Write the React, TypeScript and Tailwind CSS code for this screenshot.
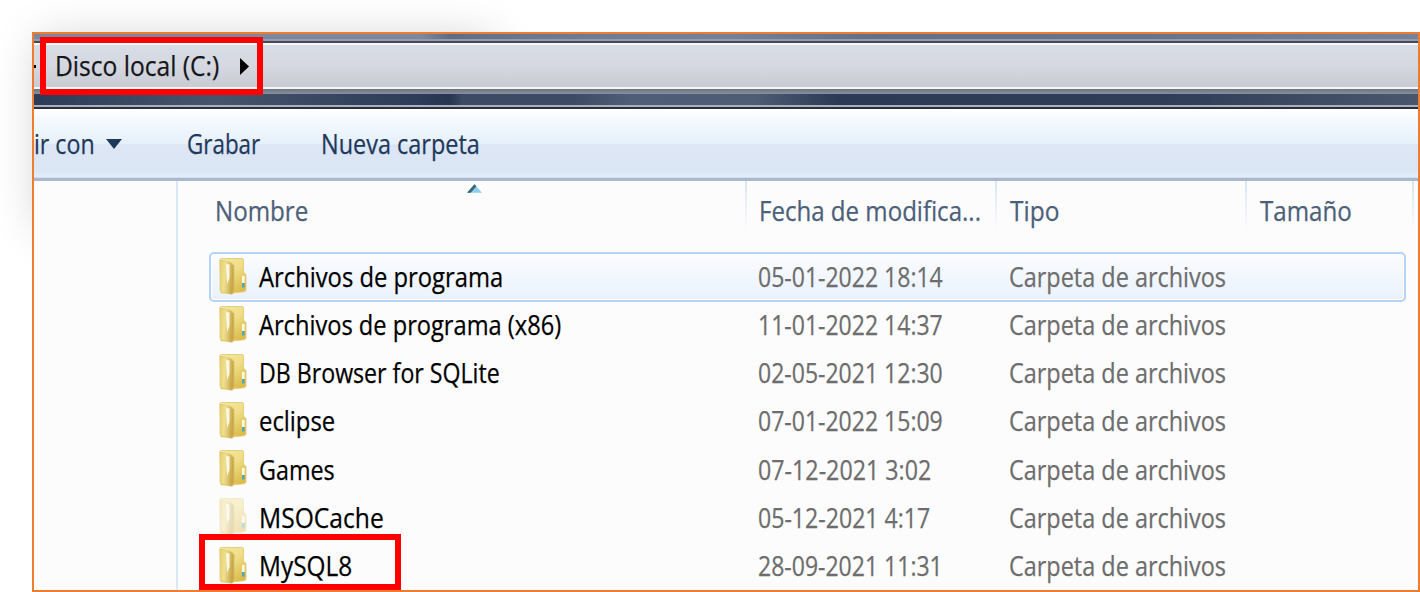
import { useLayoutEffect, useRef, useState } from "react";

function Fit({ children, w, className = "" }: { children: string; w: number; className?: string }) {
  const ref = useRef<HTMLSpanElement>(null);
  const [scale, setScale] = useState(1);
  useLayoutEffect(() => {
    if (ref.current) setScale(w / ref.current.offsetWidth);
  }, [w]);
  return (
    <span className="block shrink-0" style={{ width: w }}>
      <span
        ref={ref}
        className={"inline-block origin-left whitespace-pre [-webkit-text-stroke:0.25px] " + className}
        style={{ transform: `scaleX(${scale})` }}
      >
        {children}
      </span>
    </span>
  );
}

function Folder({ faded = false }: { faded?: boolean }) {
  return (
    <svg viewBox="0 0 30 38" className={"-mt-[3px] h-[38px] w-[30px] shrink-0 " + (faded ? "opacity-40" : "")}>
      <defs>
        <linearGradient id="back" x1="0" y1="0" x2="0.7" y2="1">
          <stop offset="0" stopColor="#f5e9a0" />
          <stop offset="0.5" stopColor="#f0de88" />
          <stop offset="1" stopColor="#dcbb48" />
        </linearGradient>
        <linearGradient id="front" x1="0" y1="0" x2="1" y2="0.2">
          <stop offset="0" stopColor="#e8d06d" />
          <stop offset="0.45" stopColor="#efdf92" />
          <stop offset="1" stopColor="#c6a649" />
        </linearGradient>
      </defs>
      <path d="M2 3Q2 1.5 3.5 1.5H24Q25.5 1.5 25.5 3V15L28 17.5V32.5Q28 34.5 26 34.8L13 36H3Z" fill="url(#back)" stroke="#e2cc78" strokeWidth="0.9" />
      <path d="M2 3L12.5 5.5Q15.5 6.5 15.5 9.5V34.5Q15.5 38 12 37L3.5 35Q2 34.5 2 33Z" fill="url(#front)" stroke="#dcc669" strokeWidth="0.7" />
      <path d="M8 7L11.5 7.5V21L9 27Z" fill="#fffceb" opacity="0.9" />
      <path d="M15.8 8V34" stroke="#c0a44d" strokeWidth="1.2" opacity="0.6" />
      <rect x="24" y="19" width="2.6" height="7" fill="#fbf8e4" />
      <rect x="24" y="26" width="2.6" height="4.5" fill="#4aa7bd" />
    </svg>
  );
}

const rows = [
  { name: "Archivos de programa", w: 244, date: "05-01-2022 18:14", dw: 185 },
  { name: "Archivos de programa (x86)", w: 302, date: "11-01-2022 14:37", dw: 185 },
  { name: "DB Browser for SQLite", w: 241, date: "02-05-2021 12:30", dw: 185 },
  { name: "eclipse", w: 76, date: "07-01-2022 15:09", dw: 185 },
  { name: "Games", w: 76, date: "07-12-2021 3:02", dw: 173 },
  { name: "MSOCache", w: 125, date: "05-12-2021 4:17", dw: 172 },
  { name: "MySQL8", w: 93, date: "28-09-2021 11:31", dw: 185 },
];

function Divider() {
  return <div className="h-[50px] w-[2px] shrink-0 bg-linear-to-b from-[#d6e5f5] to-[#fcfcfc]" />;
}

export default function App() {
  return (
    <div className="relative h-[592px] w-[1420px] overflow-hidden bg-white font-['Open_Sans','Noto_Sans',sans-serif] text-[27px] leading-[36px]">
      <div className="absolute top-[46px] left-[46px] h-[176px] w-[440px] shadow-[0_0_44px_6px_rgba(0,0,0,0.2)]" />
      <div className="relative mt-[32px] ml-[32px] flex h-[560px] w-[1388px] flex-col overflow-hidden border-2 border-[#ed7d31] bg-[#fcfcfc]">
        <div className="h-[5px] shrink-0 bg-[linear-gradient(90deg,#7b88a0_0%,#7c88a0_28%,#5f6c86_30%,#6b7892_36%,#74819a_50%,#63708a_60%,#66738d_80%,#75829a_100%)]" />
        <div className="h-[2px] shrink-0 bg-[#929cae]" />
        <div className="h-[2px] shrink-0 bg-[#484b55]" />
        <div className="flex h-[46px] shrink-0 items-center border-y-2 border-[#f5f6f8] bg-linear-to-b from-[#d8dce5] via-[#d5d8e0] to-[#c8cbd2]">
          <div className="h-[3px] w-[2px] bg-black" />
          <div className="w-[19px]" />
          <Fit w={164} className="text-[#15161a]">Disco local (C:)</Fit>
          <svg viewBox="0 0 9 17" className="ml-[21px] h-[17px] w-[9px]"><path d="M0 0L9 8.5L0 17Z" fill="#000" /></svg>
        </div>
        <div className="h-[5px] shrink-0 bg-linear-to-b from-[#6d737f] to-[#8b919b]" />
        <div className="h-[11px] shrink-0 bg-[linear-gradient(90deg,#2c3b57_0%,#46546b_13%,#2c3b57_28%,#263550_30%,#3c4a63_31%,#3c4a63_39%,#4f5d77_43%,#4e5c74_52%,#2c3a55_58%,#303d57_82%,#4a566c_100%)]" />
        <div className="h-[2px] shrink-0 bg-[#a9afbc]" />
        <div className="h-[2px] shrink-0 bg-[#2b2f3b]" />
        <div className="flex h-[72px] shrink-0 items-center border-b-[3px] border-[#a9b8cc] bg-[linear-gradient(180deg,#ffffff_0%,#f2f8fe_22%,#e6f0fa_50%,#dce6f4_52%,#dbe6f5_90%,#e3edf8_98%,#c9d6e6_100%)] text-[#1e395b]">
          <div className="-ml-px pl-px"><Fit w={61}>ir con</Fit></div>
          <svg viewBox="0 0 16 10" className="ml-[11px] h-[10px] w-[16px]"><path d="M0 0H16L8 10Z" fill="#1e395b" /></svg>
          <div className="w-[65px]" />
          <Fit w={73}>Grabar</Fit>
          <div className="w-[61px]" />
          <Fit w={159}>Nueva carpeta</Fit>
        </div>
        <div className="flex min-h-0 grow">
          <div className="w-[142px] shrink-0" />
          <div className="w-[2px] shrink-0 bg-[#d9e7f7]" />
          <div className="flex grow flex-col">
            <div className="relative flex h-[71px] shrink-0 text-[#4c607a]">
              <div className="w-[37px] shrink-0" />
              <div className="w-[530px] shrink-0 pt-[12px]"><Fit w={93}>Nombre</Fit></div>
              <Divider />
              <div className="w-[248px] shrink-0 pt-[12px] pl-[12px]"><Fit w={222}>Fecha de modifica...</Fit></div>
              <Divider />
              <div className="w-[248px] shrink-0 pt-[12px] pl-[13px]"><Fit w={49}>Tipo</Fit></div>
              <Divider />
              <div className="w-[165px] shrink-0 pt-[12px] pl-[13px]"><Fit w={92}>Tamaño</Fit></div>
              <Divider />
              <svg viewBox="0 0 16 9" className="absolute top-[3px] left-[289px] h-[9px] w-[15px]">
                <path d="M0 9L8 0L16 9Z" fill="#8fcdea" />
                <path d="M0 9L8 0L10 2L4 9Z" fill="#386779" />
              </svg>
            </div>
            {rows.map((r, i) => (
              <div
                key={r.name}
                className={
                  "ml-[31px] flex w-[1197px] shrink-0 items-center " +
                  (i === 0
                    ? "-mb-px h-[50px] rounded-[5px] border-2 border-[#b5d3f7] bg-linear-to-b from-[#fbfcfe] to-[#eaf2fd] pl-[7px] shadow-[inset_0_0_0_1px_#fff]"
                    : "h-[48.2px] pl-[9px]")
                }
              >
                <Folder faded={r.name === "MSOCache"} />
                <div className="w-[501px] shrink-0 pl-[11px]"><Fit w={r.w} className="text-black">{r.name}</Fit></div>
                <div className="w-[260px] shrink-0 pl-[9px]"><Fit w={r.dw} className="text-[#6d6d6d]">{r.date}</Fit></div>
                <Fit w={217} className="text-[#6d6d6d]">Carpeta de archivos</Fit>
              </div>
            ))}
          </div>
        </div>
      </div>
      <div className="absolute top-[37px] left-[40px] h-[58px] w-[223px] border-6 border-[#fe0000]" />
      <div className="absolute top-[534px] left-[199px] h-[56px] w-[202px] border-6 border-[#fe0000]" />
    </div>
  );
}
